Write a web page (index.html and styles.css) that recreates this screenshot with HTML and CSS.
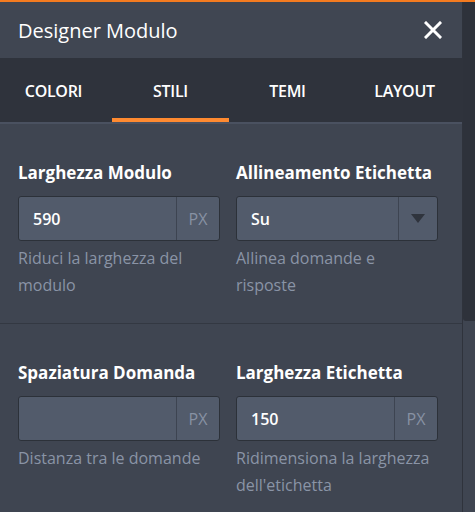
FILE: index.html
```html
<!DOCTYPE html>
<html>
<head>
  <title>Designer Modulo</title>
  <link rel="stylesheet" href="styles.css">
</head>
<body>
  <div class="designer">
    <div class="panel">
      <div class="panel-header">
        <h1 class="panel-title">Designer Modulo</h1>
        <button class="close-btn" aria-label="Chiudi">
          <svg width="18" height="18" viewBox="0 0 18 18"><path d="M2 2L16 16M16 2L2 16" stroke="#fff" stroke-width="3" stroke-linecap="square"/></svg>
        </button>
      </div>

      <!-- Tabs -->
      <div class="tabs">
        <div class="tab">COLORI</div>
        <div class="tab active">STILI</div>
        <div class="tab">TEMI</div>
        <div class="tab">LAYOUT</div>
      </div>

      <div class="section first">
        <div class="field">
          <div class="field-label">Larghezza Modulo</div>
          <div class="input-group">
            <div class="input-value">590</div>
            <div class="input-addon">PX</div>
          </div>
          <div class="field-help">Riduci la larghezza del modulo</div>
        </div>
        <div class="field">
          <div class="field-label">Allineamento Etichetta</div>
          <div class="input-group">
            <div class="input-value">Su</div>
            <div class="input-addon select-arrow"><span class="triangle"></span></div>
          </div>
          <div class="field-help">Allinea domande e risposte</div>
        </div>
      </div>

      <div class="section">
        <div class="field">
          <div class="field-label">Spaziatura Domanda</div>
          <div class="input-group">
            <div class="input-value"></div>
            <div class="input-addon">PX</div>
          </div>
          <div class="field-help">Distanza tra le domande</div>
        </div>
        <div class="field">
          <div class="field-label">Larghezza Etichetta</div>
          <div class="input-group">
            <div class="input-value">150</div>
            <div class="input-addon">PX</div>
          </div>
          <div class="field-help">Ridimensiona la larghezza dell'etichetta</div>
        </div>
      </div>
    </div>

    <div class="scrollbar"><div class="scroll-thumb"></div></div>
  </div>
</body>
</html>
```

FILE: styles.css
```css
  html, body {
    margin: 0;
    height: 100%;
  }

  body {
    background-color: #3f4551;
    font-family: "Open Sans", sans-serif;
    color: #ffffff;
    overflow: hidden;
  }

  /* Whole designer */
  .designer {
    display: flex;
    height: 100%;
    border-top: 2px solid #f47b20;
    box-sizing: border-box;
  }

  .panel {
    flex: 1;
    min-width: 0;
    overflow: hidden;
  }

  /* Header */
  .panel-header {
    height: 56px;
    display: flex;
    align-items: center;
    justify-content: space-between;
    padding: 0 20px 0 18px;
    background-color: #404652;
  }

  .panel-title {
    margin: 0;
    font-size: 20px;
    font-weight: 400;
    letter-spacing: 0;
  }

  .close-btn {
    background: none;
    border: none;
    padding: 0;
    display: flex;
    cursor: pointer;
  }

  /* Tabs */
  .tabs {
    display: grid;
    grid-template-columns: repeat(4, 117px);
    margin-left: -5px;
    background-color: #2f333c;
    border-bottom: 2px solid #4a5160;
  }

  .tab {
    height: 64px;
    display: flex;
    align-items: center;
    justify-content: center;
    font-size: 16px;
    font-weight: 600;
    letter-spacing: -0.3px;
    box-sizing: border-box;
    padding-top: 2px;
  }

  .tab.active {
    border-bottom: 4px solid #ff8a30;
    padding-top: 6px;
  }

  /* Sections */
  .section {
    display: grid;
    grid-template-columns: 202px 202px;
    column-gap: 16px;
    padding: 38px 18px 24px;
    border-bottom: 1px solid #333842;
  }

  .field-label {
    font-size: 17px;
    font-weight: 700;
    line-height: 22px;
    margin-bottom: 12px;
  }

  .input-group {
    display: flex;
    height: 45px;
    border: 1px solid #2c3139;
    border-radius: 3px;
    background-color: #525b6b;
    box-sizing: border-box;
  }

  .input-value {
    flex: 1;
    display: flex;
    align-items: center;
    padding-left: 14px;
    font-size: 16px;
    font-weight: 600;
  }

  .input-addon {
    width: 42px;
    display: flex;
    align-items: center;
    justify-content: center;
    border-left: 1px solid #3d4451;
    color: #8791a3;
    font-size: 16px;
  }

  .select-arrow {
    width: 38px;
  }

  .triangle {
    width: 0;
    height: 0;
    border-left: 7px solid transparent;
    border-right: 7px solid transparent;
    border-top: 9px solid #2f343d;
  }

  .field-help {
    margin-top: 4px;
    font-size: 16px;
    line-height: 27px;
    color: #8a94a6;
  }

  /* Fake scrollbar */
  .scrollbar {
    width: 12px;
    background-color: #3f4551;
    border-left: 1px solid #2f333c;
  }

  .scroll-thumb {
    height: 319px;
    background-color: #2e323b;
    border-bottom-left-radius: 3px;
  }
```
